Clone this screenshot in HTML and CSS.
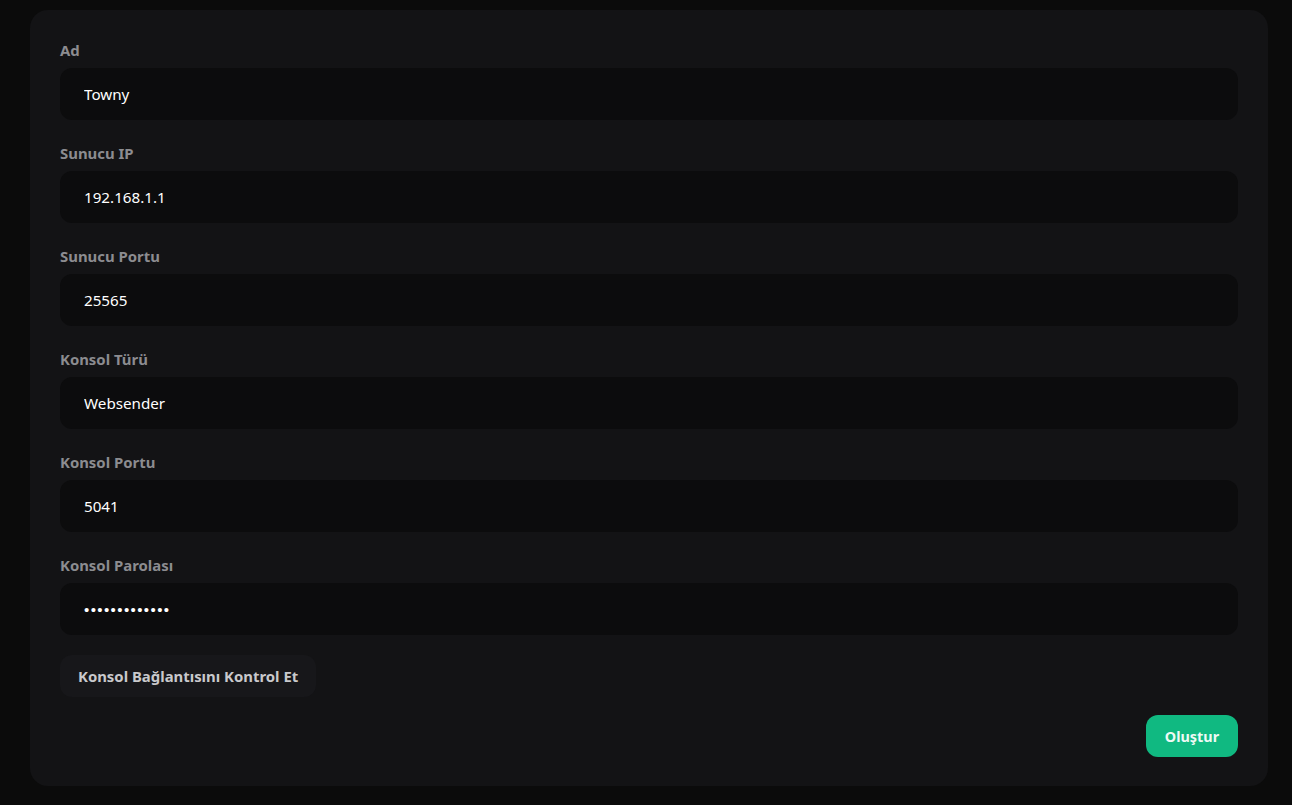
FILE: index.html
```html
<!DOCTYPE html>
<html lang="tr">
<head>
<meta charset="utf-8">
<title>Sunucu Oluştur</title>
<link rel="stylesheet" href="styles.css">
</head>
<body>
<main class="card">
  <form class="form">
    <div class="field">
      <label class="label" for="ad">Ad</label>
      <input class="input" id="ad" type="text" value="Towny">
    </div>
    <div class="field">
      <label class="label" for="ip">Sunucu IP</label>
      <input class="input" id="ip" type="text" value="192.168.1.1">
    </div>
    <div class="field">
      <label class="label" for="port">Sunucu Portu</label>
      <input class="input" id="port" type="text" value="25565">
    </div>
    <div class="field">
      <label class="label" for="tur">Konsol Türü</label>
      <input class="input" id="tur" type="text" value="Websender">
    </div>
    <div class="field">
      <label class="label" for="kport">Konsol Portu</label>
      <input class="input" id="kport" type="text" value="5041">
    </div>
    <div class="field">
      <label class="label" for="parola">Konsol Parolası</label>
      <input class="input input-password" id="parola" type="password" value="abcdefghijklm">
    </div>
    <div class="check-row">
      <button type="button" class="btn-check">Konsol Bağlantısını Kontrol Et</button>
    </div>
    <div class="submit-row">
      <button type="button" class="btn-submit">Oluştur</button>
    </div>
  </form>
</main>
</body>
</html>
```
FILE: styles.css
```css
* { box-sizing: border-box; }
html, body {
  margin: 0;
  padding: 0;
  background: #0b0b0b;
  font-family: "Noto Sans", "Open Sans", "Liberation Sans", sans-serif;
}
body {
  padding: 10px 24px 19px 30px;
  height: 805px;
}
.card {
  background: #131315;
  border-radius: 18px;
  padding: 30px 30px 29px 30px;
  height: 776px;
}
.form {
  display: flex;
  flex-direction: column;
}
.field {
  display: flex;
  flex-direction: column;
  gap: 8px;
  margin-bottom: 23px;
}
.field:nth-child(6) { margin-bottom: 20px; }
.label {
  font-size: 14.9px;
  line-height: 20px;
  font-weight: 700;
  color: #8c8c90;
}
.input {
  height: 52px;
  border: none;
  outline: none;
  background: #0c0c0d;
  border-radius: 12px;
  padding: 0 24px;
  color: #ffffff;
  font-family: inherit;
  font-size: 15.2px;
}
.input-password {
  font-family: "Liberation Sans", sans-serif;
  font-size: 15px;
  letter-spacing: 1.4px;
}
.check-row { display: flex; margin-bottom: 18px; }
.btn-check {
  height: 42px;
  padding: 0 18px;
  border: none;
  border-radius: 12px;
  background: #17171a;
  color: #c9c9cc;
  font-family: inherit;
  font-size: 14.9px;
  font-weight: 700;
}
.submit-row { display: flex; justify-content: flex-end; }
.btn-submit {
  height: 42px;
  width: 92px;
  border: none;
  border-radius: 12px;
  background: #10b981;
  color: #eefaf5;
  font-family: inherit;
  font-size: 14.4px;
  font-weight: 700;
}
```
